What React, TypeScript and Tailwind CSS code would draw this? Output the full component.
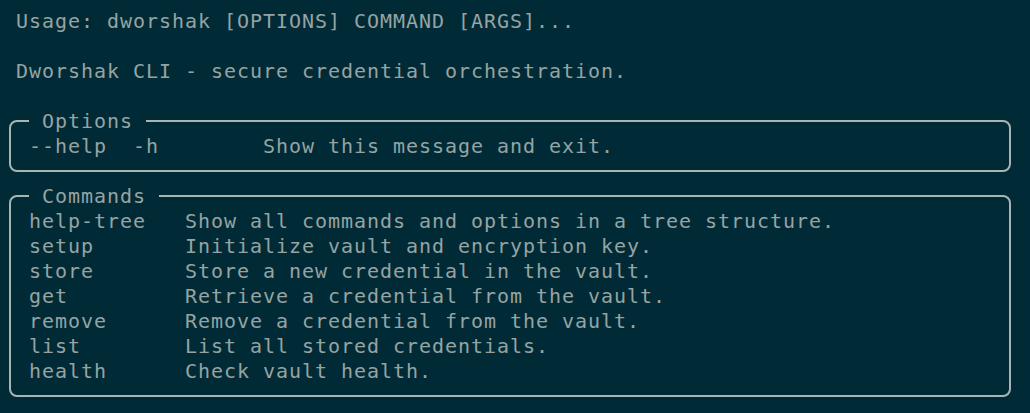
import React from "react";

const commands: [string, string][] = [
  ["help-tree", "Show all commands and options in a tree structure."],
  ["setup", "Initialize vault and encryption key."],
  ["store", "Store a new credential in the vault."],
  ["get", "Retrieve a credential from the vault."],
  ["remove", "Remove a credential from the vault."],
  ["list", "List all stored credentials."],
  ["health", "Check vault health."],
];

function Box({ title, children }: { title: string; children: React.ReactNode }) {
  return (
    <div className="relative ml-[-7px] w-[1002px] rounded-[8px] border-2 border-[#a9b4b4] pt-[12px] pb-[11px] pl-[18px]">
      <div className="absolute left-[18px] top-[-13px] h-[25px] bg-[#002b36] whitespace-pre">{` ${title} `}</div>
      {children}
    </div>
  );
}

export default function App() {
  return (
    <div
      className="min-h-[413px] w-[1030px] bg-[#002b36] pt-[9px] pl-[16px] text-[20px] leading-[25px] tracking-[0.96px] text-[#96a3a3] whitespace-pre"
      style={{ fontFamily: '"DejaVu Sans Mono", "Liberation Mono", monospace' }}
    >
      <div className="h-[25px]">Usage: dworshak [OPTIONS] COMMAND [ARGS]...</div>
      <div className="h-[25px]"></div>
      <div className="h-[25px]">Dworshak CLI - secure credential orchestration.</div>
      <div className="h-[25px]"></div>
      <div className="mt-[11px]">
        <Box title="Options">
          <div className="h-[25px]">{"--help  -h        Show this message and exit."}</div>
        </Box>
      </div>
      <div className="mt-[23px]">
        <Box title="Commands">
          {commands.map(([name, desc]) => (
            <div key={name} className="h-[25px]">
              {name.padEnd(12, " ") + desc}
            </div>
          ))}
        </Box>
      </div>
    </div>
  );
}
